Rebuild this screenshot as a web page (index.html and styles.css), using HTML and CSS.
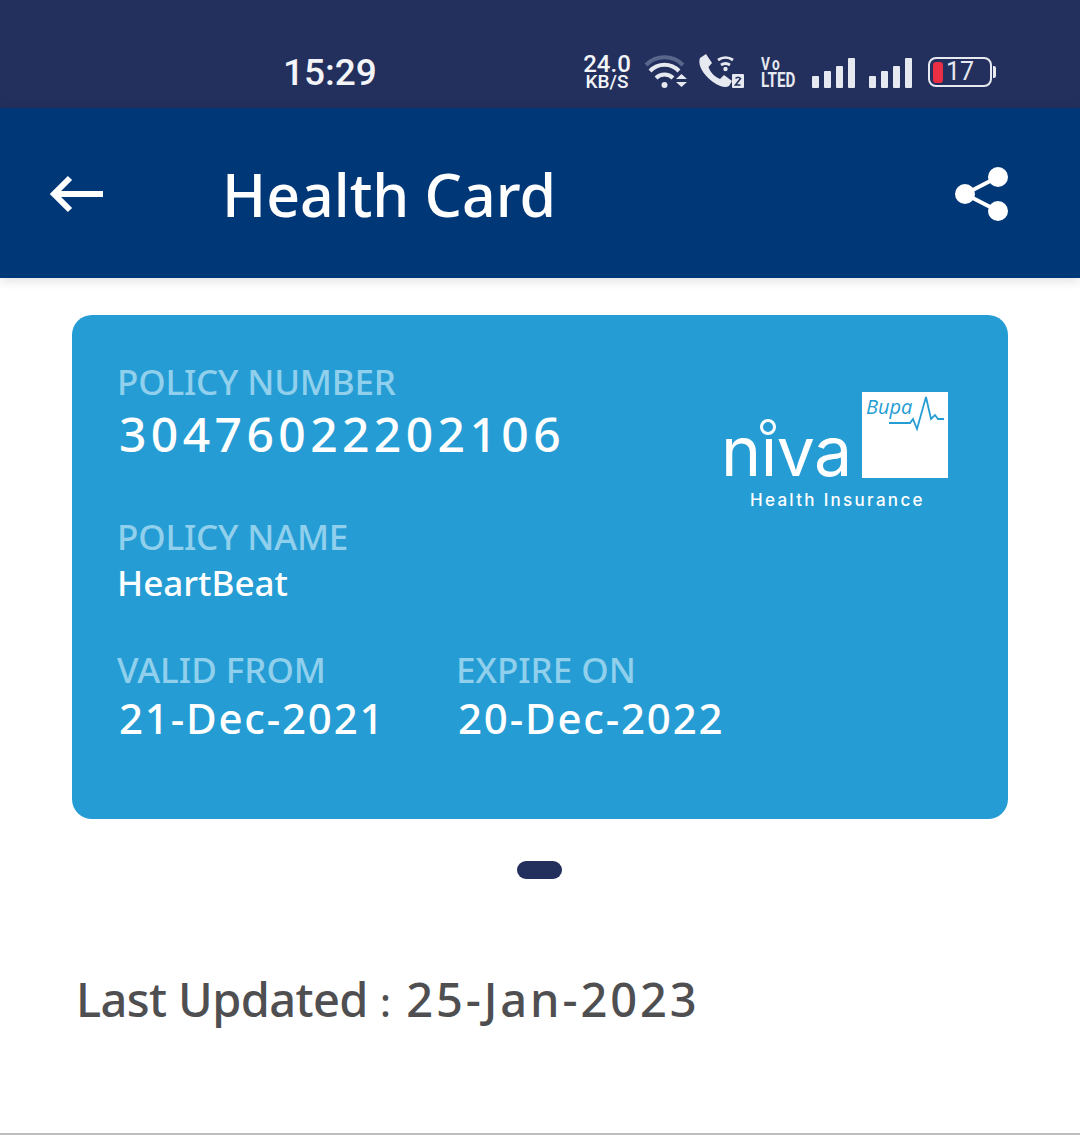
FILE: index.html
```html
<!DOCTYPE html>
<html lang="en">
<head>
    <meta charset="UTF-8">
    <meta name="viewport" content="width=device-width, initial-scale=1.0">
    <title>Health Card</title>
    <link rel="stylesheet" href="styles.css">
</head>
<body>
<div class="status-bar">
    <span class="time">15:29</span>
    <div class="status-icons">
        <p class="speed">24.0 KB/S</p>
        <svg class="icon-wifi" width="44" height="36" viewBox="0 0 44 36">
            <path d="M2 11 A26 26 0 0 1 39 11" fill="none" stroke="#59668c" stroke-width="4"/>
            <path d="M6 17 A20 20 0 0 1 35 17" fill="none" stroke="#e6e9f0" stroke-width="4"/>
            <path d="M12 24 A12 12 0 0 1 29 24" fill="none" stroke="#e6e9f0" stroke-width="4"/>
            <circle cx="20.500" cy="31" r="3" fill="#e6e9f0"/>
            <path d="M32 25 L37.500 20 L43 25 Z M32 28 L43 28 L37.500 33 Z" fill="#e6e9f0"/>
        </svg>
        <svg class="icon-call" width="46" height="36" viewBox="0 0 46 36">
            <path d="M2 4 L8 0 L14 9 L10.500 13 C12 18 17 23 22 25 L26 21 L34 27 L31 32 C28 34 22 33 15 28 C7 22 -1 12 2 4 Z" fill="#e6e9f0"/>
            <path d="M20 6 A13 13 0 0 1 35 6" fill="none" stroke="#e6e9f0" stroke-width="2.800"/>
            <path d="M23 11 A8 8 0 0 1 32 11" fill="none" stroke="#e6e9f0" stroke-width="2.800"/>
            <circle cx="27.500" cy="15" r="2.200" fill="#e6e9f0"/>
            <rect x="34" y="20" width="12" height="14" rx="1" fill="#e6e9f0"/>
            <path d="M37.500 24.500 Q40 22 42.500 24.500 L37.500 31 H42.500" fill="none" stroke="#232f5c" stroke-width="1.600"/>
        </svg>
        <p class="volte">Vo LTED</p>
        <div class="signal">
            <span class="bar bar-1"></span><span class="bar bar-2"></span><span class="bar bar-3"></span><span class="bar bar-4"></span>
        </div>
        <div class="signal">
            <span class="bar bar-1"></span><span class="bar bar-2"></span><span class="bar bar-3"></span><span class="bar bar-4"></span>
        </div>
        <div class="battery">
            <div class="battery-body">
                <span class="battery-level"></span>
                <span class="battery-num">17</span>
            </div>
            <span class="battery-tip"></span>
        </div>
    </div>
</div>

<div class="app-bar">
    <svg class="back-icon" width="56" height="38" viewBox="0 0 56 38">
        <path d="M21 3 L5 19 L21 35" fill="none" stroke="#fff" stroke-width="6"/>
        <path d="M5 19 H54" fill="none" stroke="#fff" stroke-width="6"/>
    </svg>
    <h1 class="title">Health Card</h1>
    <svg class="share-icon" width="54" height="54" viewBox="0 0 54 54">
        <path d="M43 10 L10 27 L43 44" fill="none" stroke="#fff" stroke-width="4"/>
        <circle cx="43" cy="10" r="10" fill="#fff"/>
        <circle cx="10" cy="27" r="10" fill="#fff"/>
        <circle cx="43" cy="44" r="10" fill="#fff"/>
    </svg>
</div>

<div class="content">
    <div class="card">
        <div class="card-top">
            <div class="policy">
                <p class="label">POLICY NUMBER</p>
                <p class="value value-big">30476022202106</p>
                <p class="label label-name">POLICY NAME</p>
                <p class="value value-name">HeartBeat</p>
            </div>
            <div class="logo">
                <div class="logo-row">
                    <div class="niva-word">
                        <span class="niva">niva</span>
                        <span class="niva-ring"></span>
                    </div>
                    <div class="bupa-box">
                        <span class="bupa">Bupa</span>
                        <svg class="bupa-line" width="86" height="40" viewBox="0 0 86 40">
                            <path d="M27 31 H48 L51 27 L55 37 L64 5 L69 27 L73 23 L76 27 H82" fill="none" stroke="#259dd4" stroke-width="1.800"/>
                        </svg>
                    </div>
                </div>
                <p class="logo-sub">Health Insurance</p>
            </div>
        </div>
        <div class="dates">
            <div class="date-col">
                <p class="label label-date">VALID FROM</p>
                <p class="value value-date">21-Dec-2021</p>
            </div>
            <div class="date-col">
                <p class="label label-date">EXPIRE ON</p>
                <p class="value value-date">20-Dec-2022</p>
            </div>
        </div>
    </div>
    <div class="pager"><span class="pager-dot"></span></div>
    <p class="updated"><span class="updated-label">Last Updated</span> <span class="updated-sep">:</span> <span class="updated-date">25-Jan-2023</span></p>
</div>
</body>
</html>
```

FILE: styles.css
```css
/* page */
* {
    box-sizing: border-box;
}
html, body {
    height: 100%;
}
body {
    font-family: "Noto Sans", "Open Sans", sans-serif;
    background-color: #fff;
    margin: 0;
    display: flex;
    flex-direction: column;
    border-bottom: 2px solid #bdbdbd;
    overflow: hidden;
}
p, h1 {
    margin: 0;
}

/* status bar */
.status-bar {
    height: 108px;
    flex-shrink: 0;
    background-color: #232f5c;
    color: #e6e9f0;
    display: flex;
    align-items: center;
    padding: 36px 0 0 283px;
}
.time {
    font-family: "Roboto", sans-serif;
    font-size: 37px;
    font-weight: 500;
    line-height: 38px;
    width: 299px;
    margin-top: 2px;
    color: #f2f4f8;
}
.status-icons {
    display: flex;
    align-items: center;
    height: 40px;
}
.speed {
    width: 50px;
    text-align: center;
    margin-top: 2px;
    font-family: "Roboto", sans-serif;
    font-size: 19px;
    font-weight: 500;
    line-height: 18px;
    color: #f2f4f8;
}
.speed::first-line {
    font-size: 24px;
}
.icon-wifi {
    margin-left: 12px;
}
.icon-call {
    margin-left: 10px;
}
.volte {
    margin-left: 17px;
    width: 36px;
    flex-shrink: 0;
    font-family: "Roboto", sans-serif;
    font-weight: 700;
    font-size: 20px;
    line-height: 16px;
    word-spacing: 40px;
    transform: scaleX(0.76);
    transform-origin: left center;
}
.volte::first-line {
    font-size: 18px;
    letter-spacing: 3px;
}
.signal {
    display: flex;
    align-items: flex-end;
    gap: 5px;
    height: 31px;
    margin-left: 15px;
}
.signal + .signal {
    margin-left: 14px;
}
.bar {
    width: 7px;
    background-color: #e6e9f0;
    border-radius: 1px;
}
.bar-1 {
    height: 12px;
}
.bar-2 {
    height: 17px;
}
.bar-3 {
    height: 22px;
}
.bar-4 {
    height: 30px;
}
.battery {
    margin-left: 16px;
    display: flex;
    align-items: center;
}
.battery-body {
    width: 64px;
    height: 30px;
    border: 2px solid #e6e9f0;
    border-radius: 8px;
    display: flex;
    align-items: center;
    padding-left: 3px;
}
.battery-level {
    width: 10px;
    height: 21px;
    background-color: #ea2f45;
    border-radius: 3px;
}
.battery-num {
    font-family: "Roboto", sans-serif;
    font-size: 25px;
    line-height: 26px;
    margin-left: 3px;
}
.battery-tip {
    width: 3px;
    height: 12px;
    background-color: #e6e9f0;
    margin-left: 1px;
    border-radius: 0 2px 2px 0;
}

/* app bar */
.app-bar {
    height: 170px;
    flex-shrink: 0;
    background-color: #003777;
    display: flex;
    align-items: center;
    padding: 0 71px 0 49px;
    box-shadow: 0 3px 10px rgba(0, 0, 0, 0.12);
    position: relative;
}
.back-icon {
    margin-top: 2px;
}
.title {
    flex: 1;
    margin-left: 117px;
    margin-top: 2px;
    color: #fff;
    font-size: 59px;
    font-weight: 500;
    line-height: 80px;
}
.share-icon {
    margin-top: 2px;
}

/* card */
.content {
    padding: 37px 72px 0;
}
.card {
    height: 504px;
    background-color: #259dd4;
    border-radius: 20px;
    padding: 45px 60px 0 46px;
}
.card-top {
    display: flex;
    justify-content: space-between;
}
.label {
    color: #90d0ec;
    font-size: 35px;
    font-weight: 500;
    line-height: 44px;
    letter-spacing: -0.2px;
    margin-left: -1px;
}
.label-date {
    letter-spacing: 0;
}
.value {
    color: #fff;
    font-weight: 500;
    margin-left: 1px;
}
.value-big {
    font-size: 48px;
    line-height: 60px;
    letter-spacing: 4.400px;
}
.label-name {
    margin-top: 51px;
}
.value-name {
    font-size: 35px;
    line-height: 48px;
    margin-left: -1px;
}
.dates {
    display: flex;
    margin-top: 41px;
}
.date-col {
    width: 339px;
}
.value-date {
    font-size: 42px;
    line-height: 52px;
    letter-spacing: 1.800px;
}

/* logo */
.logo {
    margin-top: 32px;
    width: 224px;
    color: #fff;
}
.logo-row {
    display: flex;
    align-items: flex-end;
    justify-content: space-between;
}
.niva-word {
    position: relative;
    height: 86px;
}
.niva {
    font-family: "Inter", sans-serif;
    font-size: 68px;
    line-height: 88px;
    letter-spacing: -0.5px;
    color: #fff;
    position: absolute;
    left: -3px;
    bottom: -17px;
}
.niva-ring {
    position: absolute;
    left: 36px;
    top: 27px;
    width: 16px;
    height: 16px;
    background-color: #259dd4;
    border: 3.500px solid #fff;
    border-radius: 50%;
}
.bupa-box {
    width: 86px;
    height: 86px;
    background-color: #fff;
    position: relative;
}
.bupa {
    position: absolute;
    top: 3px;
    left: 4px;
    font-family: "Open Sans", sans-serif;
    font-style: italic;
    font-size: 20px;
    line-height: 24px;
    color: #259dd4;
}
.bupa-line {
    position: absolute;
    top: 0;
    left: 0;
}
.logo-sub {
    font-family: "Inter", sans-serif;
    font-weight: 500;
    font-size: 17px;
    line-height: 22px;
    letter-spacing: 2.300px;
    margin-top: 11px;
    padding-left: 26px;
    white-space: nowrap;
}

/* pager and footer line */
.pager {
    display: flex;
    justify-content: center;
    margin-top: 42px;
    padding-right: 2px;
}
.pager-dot {
    width: 45px;
    height: 18px;
    background-color: #232f5c;
    border-radius: 9px;
}
.updated {
    margin-top: 88px;
    margin-left: 4px;
    color: #4f4f52;
    font-size: 47px;
    font-weight: 500;
    line-height: 64px;
}
.updated-label {
    letter-spacing: -0.6px;
}
.updated-sep {
    letter-spacing: 3px;
    font-size: 40px;
}
.updated-date {
    letter-spacing: 2.900px;
}
```
